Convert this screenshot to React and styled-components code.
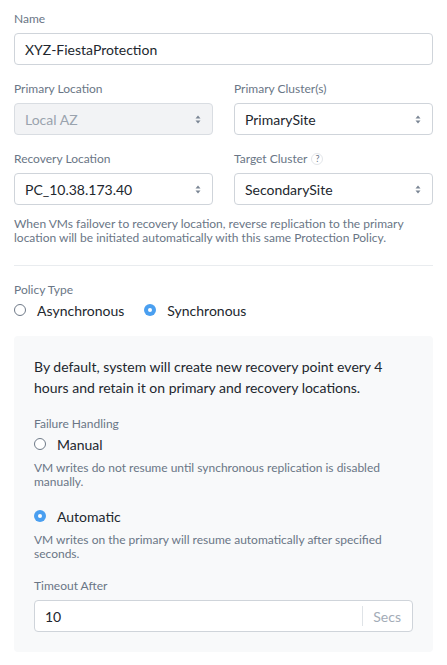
import styled, { createGlobalStyle } from "styled-components";

const GlobalStyle = createGlobalStyle`
  html, body {
    margin: 0;
    padding: 0;
    background: #ffffff;
  }
  body {
    font-family: Lato, "Open Sans", sans-serif;
    color: #22272e;
  }
  * {
    box-sizing: border-box;
  }
`;

const Page = styled.div`
  width: 447px;
  padding: 12px 14px 20px;
`;

const Field = styled.div`
  display: flex;
  flex-direction: column;
  margin-top: ${(p) => p.$mt || 0}px;
`;

const Row = styled.div`
  display: grid;
  grid-template-columns: 199px 199px;
  column-gap: 21px;
  margin-top: ${(p) => p.$mt || 0}px;
`;

const Label = styled.div`
  display: flex;
  align-items: center;
  gap: 4px;
  font-size: 12px;
  line-height: 14px;
  height: 14px;
  color: #6a7686;
  margin-bottom: ${(p) => (p.$mb === undefined ? 7 : p.$mb)}px;
`;

const HelpIcon = styled.span`
  display: inline-flex;
  align-items: center;
  justify-content: center;
  width: 12px;
  height: 12px;
  border-radius: 50%;
  border: 1px solid #e3e6ea;
  font-size: 9px;
  color: #6a7686;
`;

const TextInput = styled.div`
  height: 32px;
  border: 1px solid #cfd4da;
  border-radius: 4px;
  background: #ffffff;
  display: flex;
  align-items: center;
  padding: 0 10px;
  font-size: 14px;
  color: #22272e;
`;

const SelectBox = styled.div`
  height: 32px;
  border: 1px solid ${(p) => (p.$disabled ? "#d9dde2" : "#cfd4da")};
  border-radius: 4px;
  background: ${(p) => (p.$disabled ? "#f2f3f5" : "#ffffff")};
  display: flex;
  align-items: center;
  justify-content: space-between;
  padding: 0 11px 0 10px;
  font-size: 14px;
  color: ${(p) => (p.$disabled ? "#9aa3ae" : "#22272e")};
`;

const Carets = () => (
  <svg width="6" height="9" viewBox="0 0 6 9">
    <path d="M3 0.5 L5.5 3.5 H0.5 Z" fill="#7a8594" />
    <path d="M3 8.5 L5.5 5.5 H0.5 Z" fill="#7a8594" />
  </svg>
);

const Select = ({ value, disabled }) => (
  <SelectBox $disabled={disabled}>
    <span>{value}</span>
    <Carets />
  </SelectBox>
);

const Hint = styled.p`
  margin: ${(p) => p.$mt || 0}px 0 0;
  font-size: 12px;
  line-height: 14px;
  color: #6a7686;
`;

const Divider = styled.hr`
  border: 0;
  height: 1px;
  background: #e9ecef;
  margin: 20px 0 0;
`;

const RadioGroup = styled.div`
  display: flex;
  align-items: center;
  gap: 20px;
  margin-top: ${(p) => p.$mt || 0}px;
`;

const RadioItem = styled.label`
  display: flex;
  align-items: center;
  height: 20px;
  gap: 11px;
  font-size: 14px;
  color: #22272e;
`;

const RadioDot = styled.span`
  width: 12px;
  height: 12px;
  border-radius: 50%;
  flex: none;
  position: relative;
  border: ${(p) => (p.$checked ? "none" : "1.2px solid #6f7a88")};
  background: ${(p) => (p.$checked ? "#4a9ff0" : "#ffffff")};
  &::after {
    content: "";
    display: ${(p) => (p.$checked ? "block" : "none")};
    position: absolute;
    left: 4px;
    top: 4px;
    width: 4px;
    height: 4px;
    border-radius: 50%;
    background: #ffffff;
  }
`;

const Radio = ({ checked, children }) => (
  <RadioItem>
    <RadioDot $checked={checked} />
    {children}
  </RadioItem>
);

const Panel = styled.div`
  margin-top: 16px;
  background: #f8f9fa;
  border-radius: 4px;
  padding: 20px 20px 20px;
`;

const PanelText = styled.p`
  margin: 0;
  font-size: 14px;
  line-height: 21px;
  color: #22272e;
`;

const AddonInput = styled.div`
  height: 32px;
  border: 1px solid #cfd4da;
  border-radius: 4px;
  background: #ffffff;
  display: flex;
  align-items: center;
  font-size: 14px;
`;

const AddonValue = styled.span`
  flex: 1;
  padding: 0 10px;
  color: #22272e;
`;

const Addon = styled.span`
  border-left: 1px solid #dfe3e7;
  height: 20px;
  display: flex;
  align-items: center;
  padding: 0 11px 0 10px;
  color: #a3acb7;
`;

export default function App() {
  return (
    <>
      <GlobalStyle />
      <Page>
        <Field>
          <Label>Name</Label>
          <TextInput>XYZ-FiestaProtection</TextInput>
        </Field>

        <Row $mt={17}>
          <Field>
            <Label>Primary Location</Label>
            <Select value="Local AZ" disabled />
          </Field>
          <Field>
            <Label>Primary Cluster(s)</Label>
            <Select value="PrimarySite" />
          </Field>
        </Row>

        <Row $mt={17}>
          <Field>
            <Label>Recovery Location</Label>
            <Select value="PC_10.38.173.40" />
          </Field>
          <Field>
            <Label>
              Target Cluster<HelpIcon>?</HelpIcon>
            </Label>
            <Select value="SecondarySite" />
          </Field>
        </Row>

        <Hint $mt={12}>
          When VMs failover to recovery location, reverse replication to the
          primary location will be initiated automatically with this same
          Protection Policy.
        </Hint>

        <Divider />

        <Field $mt={17}>
          <Label $mb={3}>Policy Type</Label>
          <RadioGroup>
            <Radio>Asynchronous</Radio>
            <Radio checked>Synchronous</Radio>
          </RadioGroup>
        </Field>

        <Panel>
          <PanelText>
            By default, system will create new recovery point every 4 hours and
            retain it on primary and recovery locations.
          </PanelText>

          <Field $mt={19}>
            <Label $mb={3}>Failure Handling</Label>
            <Radio>Manual</Radio>
          </Field>
          <Hint $mt={7}>
            VM writes do not resume until synchronous replication is disabled
            manually.
          </Hint>

          <RadioGroup $mt={17}>
            <Radio checked>Automatic</Radio>
          </RadioGroup>
          <Hint $mt={7}>
            VM writes on the primary will resume automatically after specified
            seconds.
          </Hint>

          <Field $mt={18}>
            <Label>Timeout After</Label>
            <AddonInput>
              <AddonValue>10</AddonValue>
              <Addon>Secs</Addon>
            </AddonInput>
          </Field>
        </Panel>
      </Page>
    </>
  );
}
